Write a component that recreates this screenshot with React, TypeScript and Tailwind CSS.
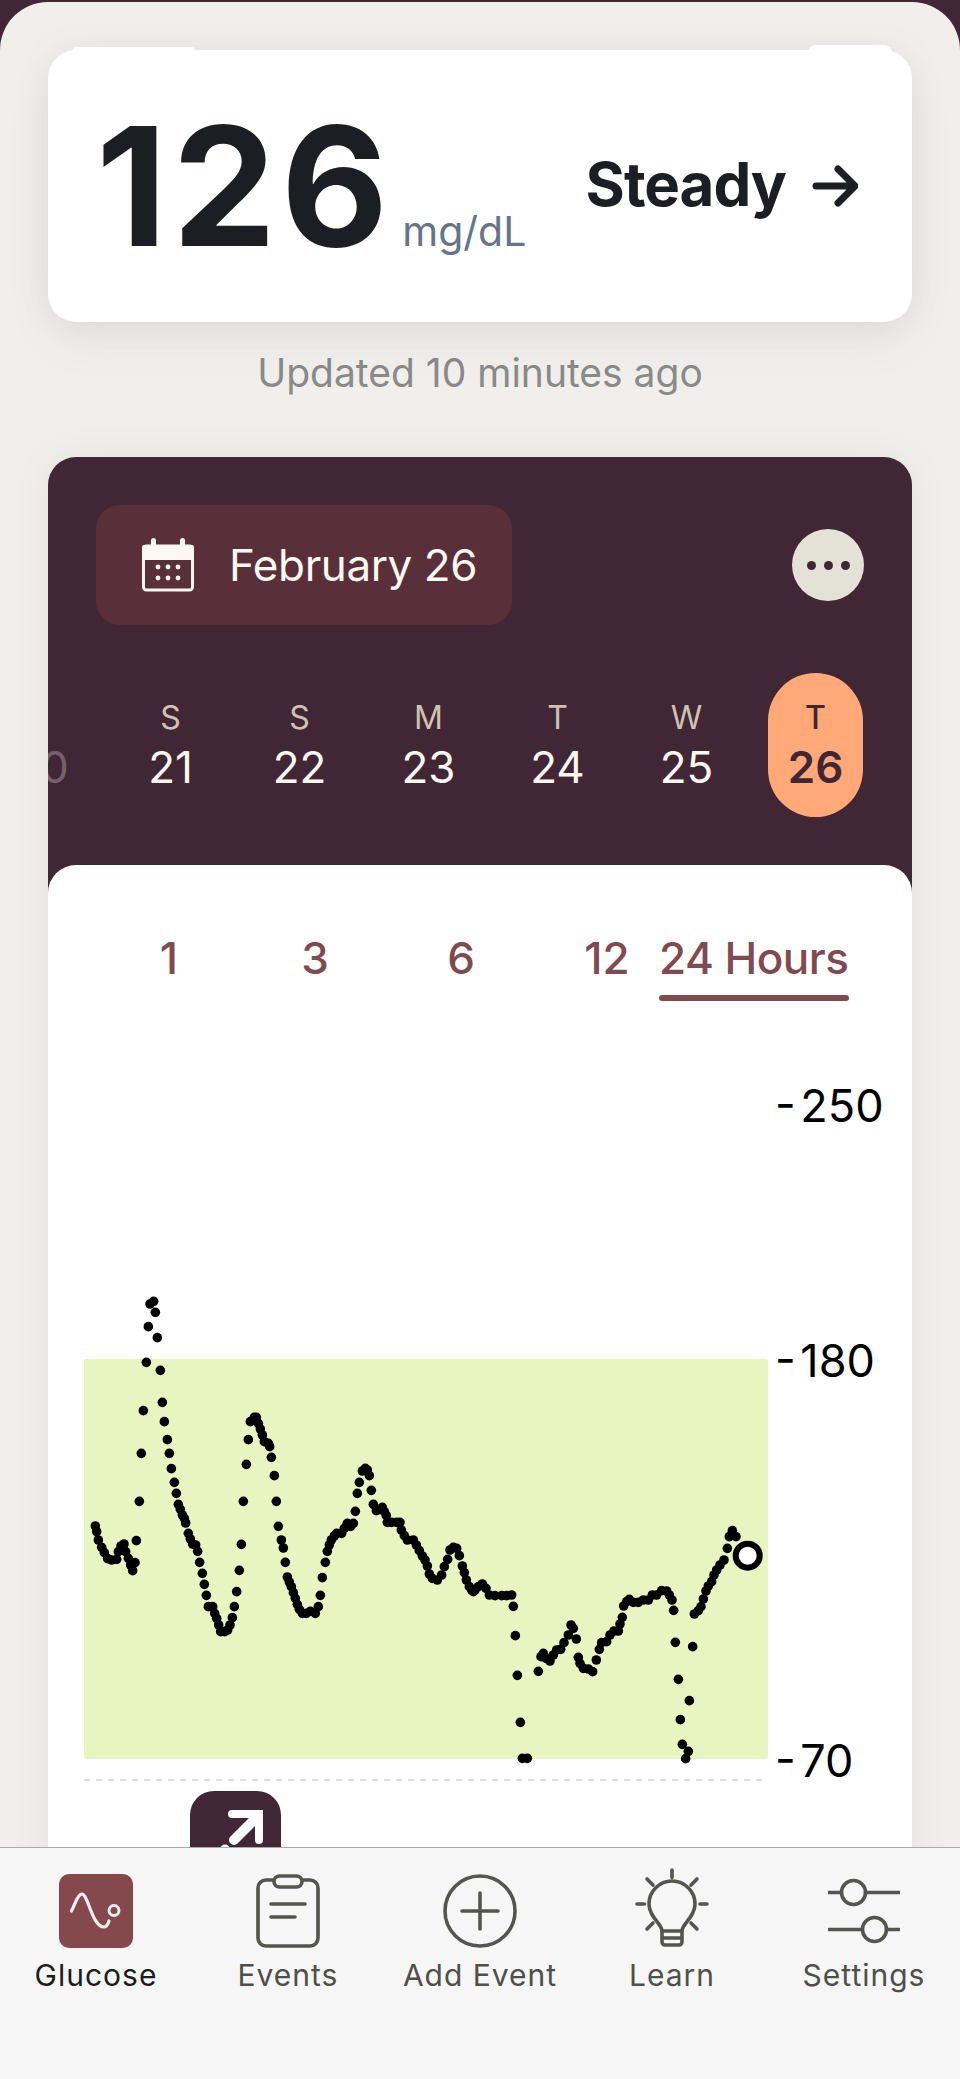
import React from 'react'

// dot positions read off the chart, in zoomed px of two crops
const leftDots: number[][] = [
  [106,768],[110,785],[115,810],[125,832],[133,848],[143,866],[155,870],[170,868],[175,845],[183,828],[192,822],[197,845],[205,865],[212,885],[218,902],[225,878],[229,812],[238,694],[244,550],[250,422],[259,277],[265,170],[270,102],[281,94],[286,127],[292,203],[301,301],[307,397],[313,455],[322,509],[328,550],[334,596],[343,637],[349,670],[355,703],[361,718],[367,735],[373,745],[377,759],[385,790],[391,807],[398,822],[407,825],[413,844],[419,877],[427,910],[433,943],[439,976],[445,1010],[458,1010],[464,1030],[470,1045],[476,1065],[482,1085],[494,1085],[503,1080],[510,1065],[517,1043],[523,1010],[530,965],[538,901],[544,823],[550,694],[559,583],[565,509],[571,455],[583,442],[589,442],[595,460],[601,477],[607,495],[613,515],[625,520],[629,530],[634,562],[643,617],[649,694],[655,769],[664,810],[670,834],[676,877],[682,921],[688,936],[694,950],[700,968],[706,985],[712,1003],[718,1018],[727,1030],[739,1030],[751,1024],[766,1030],[775,1010],[781,976],[787,923],[796,877],[802,844],[808,825],[814,810],[823,798],[830,790],[845,790],[853,775],[862,760],[872,769],[880,760],[886,724],[892,670],[898,637],[907,603],[916,595],[922,600],[928,617],[934,661],[940,703],[949,722],[958,718],[967,712],[973,725],[979,737],[982,757],[995,757],[1010,757],[1020,757],[1024,780],[1033,797],[1042,810],[1060,810],[1069,825],[1078,842],[1087,858],[1095,870],[1102,888],[1108,912],[1117,925],[1132,930],[1145,915],[1153,890],[1163,868],[1170,840],[1180,832],[1190,835],[1198,857],[1207,888],[1213,908],[1219,930],[1228,950],[1240,965],
]
const rightDots: number[][] = [
  [5,570],[15,570],[25,560],[37,552],[48,565],[58,585],[75,587],[95,587],[110,587],[125,585],[130,619],[136,707],[142,826],[151,967],[157,1075],[172,1075],[205,814],[213,770],[220,760],[228,775],[240,783],[250,765],[260,750],[272,748],[282,728],[295,705],[303,675],[310,685],[319,717],[325,772],[330,790],[340,805],[355,807],[368,815],[379,780],[388,748],[395,728],[410,725],[420,705],[432,693],[445,693],[450,672],[457,652],[461,618],[470,605],[478,598],[490,607],[505,607],[520,600],[535,600],[547,585],[560,585],[575,572],[590,573],[598,585],[606,600],[611,631],[616,727],[625,838],[631,959],[637,1033],[655,1054],[647,1076],[658,902],[668,740],[673,642],[685,632],[693,620],[700,597],[708,573],[715,558],[725,545],[732,525],[740,510],[750,495],[762,480],[772,445],[778,410],[787,392],[798,410],
]

const days = [
  { l: 'S', n: '21' },
  { l: 'S', n: '22' },
  { l: 'M', n: '23' },
  { l: 'T', n: '24' },
  { l: 'W', n: '25' },
]

function CalendarIcon() {
  return (
    <svg width="54" height="54" viewBox="0 0 54 54" fill="none">
      <path d="M3 7h48a2 2 0 0 1 2 2v13H1V9a2 2 0 0 1 2-2z" fill="#fdf8f0" />
      <rect x="2.5" y="8" width="49" height="44" rx="3" stroke="#fdf8f0" strokeWidth="3" />
      <rect x="10" y="0" width="5" height="10" rx="2.5" fill="#fdf8f0" />
      <rect x="39" y="0" width="5" height="10" rx="2.5" fill="#fdf8f0" />
      {[17, 27, 37].map((x) => (
        <g key={x} fill="#fdf8f0">
          <circle cx={x} cy="29" r="2.4" />
          <circle cx={x} cy="40" r="2.4" />
        </g>
      ))}
    </svg>
  )
}

function Chart() {
  return (
    <svg className="block" width="864" height="820" viewBox="48 1040 864 820" fill="none">
      <rect x="84" y="1359" width="684" height="400" rx="2" fill="#e9f5c0" />
      {leftDots.map(([x, y], i) => (
        <circle key={i} cx={60 + x / 3} cy={1270 + y / 3} r="4.8" fill="#000" />
      ))}
      {rightDots.map(([x, y], i) => (
        <circle key={i} cx={470 + x / 3} cy={1400 + y / 3} r="4.8" fill="#000" />
      ))}
      <circle cx="747.7" cy="1555.7" r="12" fill="#fff" stroke="#000" strokeWidth="6" />
      <line x1="84" y1="1780" x2="763" y2="1780" stroke="#dddddd" strokeWidth="2" strokeDasharray="6 6" />
    </svg>
  )
}

function TrendButton() {
  return (
    <div className="absolute left-[142px] top-[926px] w-[91px] h-[91px] rounded-[24px] bg-[#412735]">
      <svg width="91" height="91" viewBox="0 0 91 91" fill="none">
        <path d="M44 49L66 27" stroke="#fff" strokeWidth="10" strokeLinecap="round" />
        <path d="M42 23H69V49" stroke="#fff" strokeWidth="8" strokeLinejoin="miter" strokeLinecap="round" />
        <circle cx="35" cy="58.500" r="5" fill="#fff" />
      </svg>
    </div>
  )
}

const iconStroke = '#55554f'

function TabItem({ label, active, children }: { label: string; active?: boolean; children: React.ReactNode }) {
  return (
    <div className="w-[192px] flex flex-col items-center">
      <div className="h-[74px] flex items-center justify-center">{children}</div>
      <span className={`mt-[9px] text-[30px] leading-[36px] tracking-[1px] ${active ? 'text-[#1c1c1c]' : 'text-[#4f4f4b]'}`}>
        {label}
      </span>
    </div>
  )
}

export default function App() {
  return (
    <div className="w-[960px] h-[2079px] bg-[#412735] pt-[2px] overflow-hidden font-['Inter',sans-serif]">
      <div className="h-[2077px] rounded-t-[48px] bg-[#f0efeb] flex flex-col overflow-hidden">
        <div className="flex-1 min-h-0 overflow-hidden px-[48px] pt-[48px]">
          {/* reading card */}
          <div className="relative h-[272px] rounded-[28px] bg-white shadow-[0_0_40px_rgba(0,0,0,0.05),0_20px_50px_rgba(0,0,0,0.05)] flex items-start pl-[48px] pr-[54px]">
            {/* status bar remnants poking out above the card */}
            <span className="absolute left-[24px] top-[-3px] w-[124px] h-[10px] rounded-t-[5px] bg-white" />
            <span className="absolute right-[20px] top-[-5px] w-[84px] h-[12px] rounded-t-[8px] bg-white" />
            <span className="mt-[36px] text-[165px] leading-[200px] font-bold text-[#1b1f23] tracking-[5px]">126</span>
            <span className="mt-[157px] ml-[9px] text-[41px] leading-[48px] text-[#64748b]">mg/dL</span>
            <span className="mt-[99px] ml-auto text-[60px] leading-[70px] font-bold text-[#1b1f23] tracking-[-1px]">Steady</span>
            <svg className="mt-[115px] ml-[26px]" width="46" height="42" viewBox="0 0 46 42" fill="none">
              <path d="M4 21h38M26 4l17 17-17 17" stroke="#1b1f23" strokeWidth="7" strokeLinecap="round" strokeLinejoin="round" />
            </svg>
          </div>

          <p className="mt-[28px] text-center text-[39px] leading-[46px] text-[#8a8a8a]">Updated 10 minutes ago</p>

          {/* calendar + chart */}
          <div className="mt-[61px] relative rounded-[28px] bg-[#412735] overflow-hidden shadow-[0_0_40px_rgba(0,0,0,0.06)]">
            <div className="flex items-center justify-between pl-[48px] pr-[48px] pt-[48px]">
              <div className="w-[416px] h-[120px] rounded-[24px] bg-[#592f3a] flex items-center pl-[45px]">
                <CalendarIcon />
                <span className="ml-[34px] text-[44px] leading-[54px] tracking-[-0.4px] text-[#fdf8f0]">February 26</span>
              </div>
              <div className="w-[72px] h-[72px] rounded-full bg-[#e4e1d6] flex items-center justify-center gap-[8px]">
                <span className="w-[9px] h-[9px] rounded-full bg-[#412735]" />
                <span className="w-[9px] h-[9px] rounded-full bg-[#412735]" />
                <span className="w-[9px] h-[9px] rounded-full bg-[#412735]" />
              </div>
            </div>

            <div className="flex mt-[48px] ml-[-71px] h-[144px]">
              <div className="w-[129px] shrink-0 flex flex-col items-center pt-[23px]">
                <span className="h-[44px]" />
                <span className="text-[44px] leading-[54px] text-[#75606c]">20</span>
              </div>
              {days.map((d) => (
                <div key={d.n} className="w-[129px] shrink-0 flex flex-col items-center pt-[23px]">
                  <span className="text-[32px] leading-[44px] text-[#cfc3b0]">{d.l}</span>
                  <span className="text-[44px] leading-[54px] text-[#fdf8f0]">{d.n}</span>
                </div>
              ))}
              <div className="w-[95px] ml-[17px] shrink-0 rounded-[48px] bg-[#fea977] flex flex-col items-center pt-[23px]">
                <span className="text-[32px] leading-[44px] font-medium text-[#412735]">T</span>
                <span className="text-[44px] leading-[54px] font-semibold text-[#412735]">26</span>
              </div>
            </div>

            <div className="mt-[48px] relative rounded-t-[28px] bg-white h-[1100px]">
              <div className="h-[175px] relative">
                <div className="flex items-start pl-[48px] pt-[64px]">
                  {['1', '3', '6', '12'].map((t) => (
                    <span key={t} className="w-[146px] text-center text-[44px] leading-[58px] font-medium text-[#7f4a50]">{t}</span>
                  ))}
                  <span className="ml-[-21px] text-[44px] leading-[58px] font-medium text-[#7f4a50] tracking-[-0.5px] relative">
                    24 Hours
                    <span className="absolute left-0 right-0 top-[66px] h-[6px] rounded-full bg-[#7f4a50]" />
                  </span>
                </div>
              </div>
              <Chart />
              <TrendButton />
              {/* y axis ticks */}
              <span className="absolute left-[727px] top-[213px] text-[45px] leading-[56px] [word-spacing:-8px] text-black">- 250</span>
              <span className="absolute left-[727px] top-[468px] text-[45px] leading-[56px] [word-spacing:-8px] text-black">- 180</span>
              <span className="absolute left-[727px] top-[868px] text-[45px] leading-[56px] [word-spacing:-8px] text-black">- 70</span>
            </div>
          </div>
        </div>

        {/* bottom tabs */}
        <div className="h-[232px] shrink-0 border-t border-[#aaaaaa] bg-[#f6f6f6] flex pt-[26px] relative z-10">
          <TabItem label="Glucose" active>
            <div className="w-[74px] h-[74px] rounded-[10px] bg-[#84484d]">
              <svg width="74" height="74" viewBox="0 0 74 74" fill="none">
                <path d="M12.5 37C16 30 19 20 23 20C29 20 33 53 45 53C48 53 49 50 50 47" stroke="#fdf0ee" strokeWidth="3.2" strokeLinecap="round" />
                <circle cx="55" cy="36.5" r="5" stroke="#fdf0ee" strokeWidth="3" />
              </svg>
            </div>
          </TabItem>
          <TabItem label="Events">
            <svg width="64" height="74" viewBox="0 0 64 74" fill="none" stroke={iconStroke} strokeWidth="3.6" strokeLinecap="round">
              <rect x="2" y="6" width="60" height="66" rx="8" />
              <rect x="18" y="2" width="28" height="11" rx="5.5" fill="#f6f6f6" />
              <path d="M15 30h34M15 43h24" />
            </svg>
          </TabItem>
          <TabItem label="Add Event">
            <svg width="74" height="74" viewBox="0 0 74 74" fill="none" stroke={iconStroke} strokeWidth="3.6" strokeLinecap="round">
              <circle cx="37" cy="37" r="35" />
              <path d="M19 37h36M37 19v36" />
            </svg>
          </TabItem>
          <TabItem label="Learn">
            <svg className="overflow-visible" width="72" height="74" viewBox="0 0 72 74" fill="none" stroke={iconStroke} strokeWidth="3.6" strokeLinecap="round" strokeLinejoin="round">
              <path d="M36 -4V3.500M1 30H8.500M64 30H71M11 5L17 11M61 5L55 11M11 55L17 49M61 55L55 49" />
              <path d="M26 57C26 50 13 43 13 30A23 23 0 0 1 59 30C59 43 46 50 46 57" />
              <path d="M26 57H46V68A3 3 0 0 1 43 71H29A3 3 0 0 1 26 68ZM26 64H46" />
            </svg>
          </TabItem>
          <TabItem label="Settings">
            <svg width="72" height="74" viewBox="0 0 72 74" fill="none" stroke={iconStroke} strokeWidth="3.6" strokeLinecap="round">
              <path d="M1 18.500H13.500M37.500 18.500H71M1 55.500H34.500M58.500 55.500H71" />
              <circle cx="25.500" cy="18.500" r="12" />
              <circle cx="46.500" cy="55.500" r="12" />
            </svg>
          </TabItem>
        </div>
      </div>
    </div>
  )
}
